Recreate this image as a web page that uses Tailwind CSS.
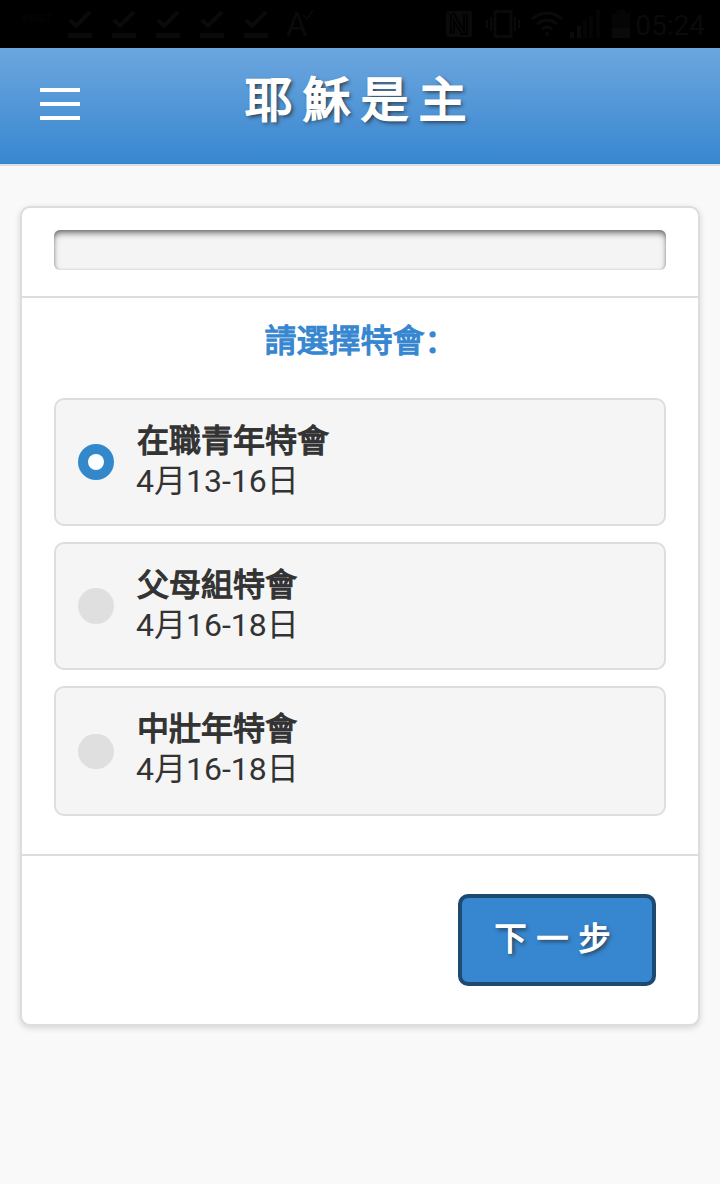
<!DOCTYPE html>
<html lang="zh-CN">
<head>
    <meta charset="UTF-8">
    <meta name="viewport" content="width=device-width, initial-scale=1.0">
    <title>耶穌是主</title>
    <script src="https://cdn.jsdelivr.net/npm/@tailwindcss/browser@4"></script>
</head>
<body class="bg-[#f9f9f9] text-[#333] font-[Roboto,'Noto_Sans_CJK_SC',sans-serif] h-[1184px] overflow-hidden">

    <!-- Status bar -->
    <div class="h-12 bg-black text-[#0a0a0a] flex items-center justify-between pl-5 pr-[15px]">
        <div class="flex items-center">
            <div class="w-[33px] h-[33px] text-[#0b0505] text-[8px] leading-none text-center pt-[7px] mr-[15px] whitespace-nowrap">耶穌是主</div>
            <div class="flex gap-5">
                <svg class="w-6 h-7" viewBox="0 0 24 28" fill="none" stroke="currentColor"><path d="M2 10l6 6L22 2" stroke-width="4"/><path d="M0 25.500h24" stroke-width="5"/></svg>
                <svg class="w-6 h-7" viewBox="0 0 24 28" fill="none" stroke="currentColor"><path d="M2 10l6 6L22 2" stroke-width="4"/><path d="M0 25.500h24" stroke-width="5"/></svg>
                <svg class="w-6 h-7" viewBox="0 0 24 28" fill="none" stroke="currentColor"><path d="M2 10l6 6L22 2" stroke-width="4"/><path d="M0 25.500h24" stroke-width="5"/></svg>
                <svg class="w-6 h-7" viewBox="0 0 24 28" fill="none" stroke="currentColor"><path d="M2 10l6 6L22 2" stroke-width="4"/><path d="M0 25.500h24" stroke-width="5"/></svg>
                <svg class="w-6 h-7" viewBox="0 0 24 28" fill="none" stroke="currentColor"><path d="M2 10l6 6L22 2" stroke-width="4"/><path d="M0 25.500h24" stroke-width="5"/></svg>
            </div>
            <div class="flex ml-[18px] pt-0.5">
                <span class="text-[33px] leading-8">A</span>
                <svg class="w-3 h-3 -ml-1.5" viewBox="0 0 12 12" fill="none" stroke="currentColor" stroke-width="1.500"><path d="M1 6l4 4 6-9"/></svg>
            </div>
        </div>
        <div class="flex items-center">
            <!-- NFC -->
            <svg class="w-[26px] h-[26px] mr-[14px]" viewBox="0 0 26 26"><rect width="26" height="26" rx="2" fill="currentColor"/><path d="M5 23V3M9 3h-1l10 17V3M8 23V10l8 13h5V3" fill="none" stroke="#000" stroke-width="1.800"/></svg>
            <!-- Vibrate -->
            <svg class="w-[34px] h-7 mr-[11px]" viewBox="0 0 34 28" fill="none" stroke="currentColor"><rect x="9" y="1.500" width="16" height="25" stroke-width="3"/><path d="M5 7v14M29 7v14M1 10v8M33 10v8" stroke-width="2"/></svg>
            <!-- Wifi -->
            <svg class="w-8 h-7 mr-[7px]" viewBox="0 0 32 28" fill="none" stroke="currentColor" stroke-width="3"><path d="M1 9q15-12 30 0M6 14q10-8 20 0M11 19q5-4 10 0"/><circle cx="16" cy="24" r="2" fill="currentColor" stroke="none"/></svg>
            <!-- Signal -->
            <svg class="w-[30px] h-7 mr-3" viewBox="0 0 30 28"><path d="M0 22h4v6H0zM7 16h4v12H7z" fill="currentColor"/><path d="M13 10h4v18h-4zM19 5h4v23h-4zM26 0h4v28h-4z" fill="#050505"/></svg>
            <!-- Battery -->
            <svg class="w-[18px] h-7 mr-[5px]" viewBox="0 0 18 28"><path d="M5 0h8v3h5v15H0V3h5z" fill="#050505"/><path d="M0 18h18v10H0z" fill="currentColor"/></svg>
            <span class="text-[28px] leading-7 pt-1">05:24</span>
        </div>
    </div>

    <!-- Header -->
    <header class="grid grid-cols-[120px_1fr_120px] h-[118px] border-b-2 border-[#dddee4] bg-linear-to-b from-[#6ba6de] to-[#3787d0]">
        <button class="flex flex-col gap-2.5 pl-10 pt-10">
            <span class="block w-10 h-1 bg-white"></span>
            <span class="block w-10 h-1 bg-white"></span>
            <span class="block w-10 h-1 bg-white"></span>
        </button>
        <h1 class="pl-px text-center text-[48px] leading-[106px] font-normal [-webkit-text-stroke:1.8px] tracking-[10px] text-white whitespace-nowrap [text-shadow:2px_2px_4px_#222]">耶穌是主</h1>
    </header>

    <!-- Card -->
    <main class="mx-5 mt-10 h-[820px] bg-white border-2 border-[#ddd] rounded-[10px] shadow-[0_2px_6px_rgba(0,0,0,0.15)]">
        <div class="h-[90px] border-b-2 border-[#ddd] px-8 pt-[22px]">
            <div class="h-10 rounded-md bg-[#f4f4f4] shadow-[inset_0_4px_6px_-1px_rgba(0,0,0,0.55),inset_0_0_3px_rgba(0,0,0,0.15)]"></div>
        </div>

        <section class="h-[558px] border-b-2 border-[#ddd] px-8">
            <h2 class="h-[100px] pt-[19px] pl-px text-center text-[32px] leading-[48px] font-normal [-webkit-text-stroke:1.3px] text-[#3787d0]">請選擇特會：</h2>
            <div class="flex flex-col gap-4">
                <label class="flex h-32 items-center bg-[#f5f5f5] border-2 border-[#ddd] rounded-[10px] pl-[22px]">
                    <span class="flex w-9 h-9 mr-[22px] items-center justify-center rounded-full bg-[#3388cc]"><span class="w-4 h-4 rounded-full bg-white"></span></span>
                    <span class="self-start pt-[21px] text-[32px] leading-10"><b class="block pl-px font-normal [-webkit-text-stroke:1.3px]">在職青年特會</b>4月13-16日</span>
                </label>
                <label class="flex h-32 items-center bg-[#f5f5f5] border-2 border-[#ddd] rounded-[10px] pl-[22px]">
                    <span class="w-9 h-9 mr-[22px] rounded-full bg-[#dfdfdf]"></span>
                    <span class="self-start pt-[21px] text-[32px] leading-10"><b class="block pl-px font-normal [-webkit-text-stroke:1.3px]">父母組特會</b>4月16-18日</span>
                </label>
                <label class="flex h-[130px] items-center bg-[#f5f5f5] border-2 border-[#ddd] rounded-[10px] pl-[22px]">
                    <span class="w-9 h-[35px] mr-[22px] rounded-full bg-[#dfdfdf]"></span>
                    <span class="self-start pt-[21px] text-[32px] leading-10"><b class="block pl-px font-normal [-webkit-text-stroke:1.3px]">中壯年特會</b>4月16-18日</span>
                </label>
            </div>
        </section>

        <div class="flex justify-end pt-[38px] pr-[42px]">
            <button class="w-[198px] h-[92px] pb-0.5 pl-px rounded-[10px] border-4 border-[#1c4a70] bg-[#3787d0] text-[32px] leading-none font-normal [-webkit-text-stroke:1.3px] tracking-[10px] text-white [text-shadow:2px_2px_4px_#222]">下一步</button>
        </div>
    </main>

</body>
</html>
